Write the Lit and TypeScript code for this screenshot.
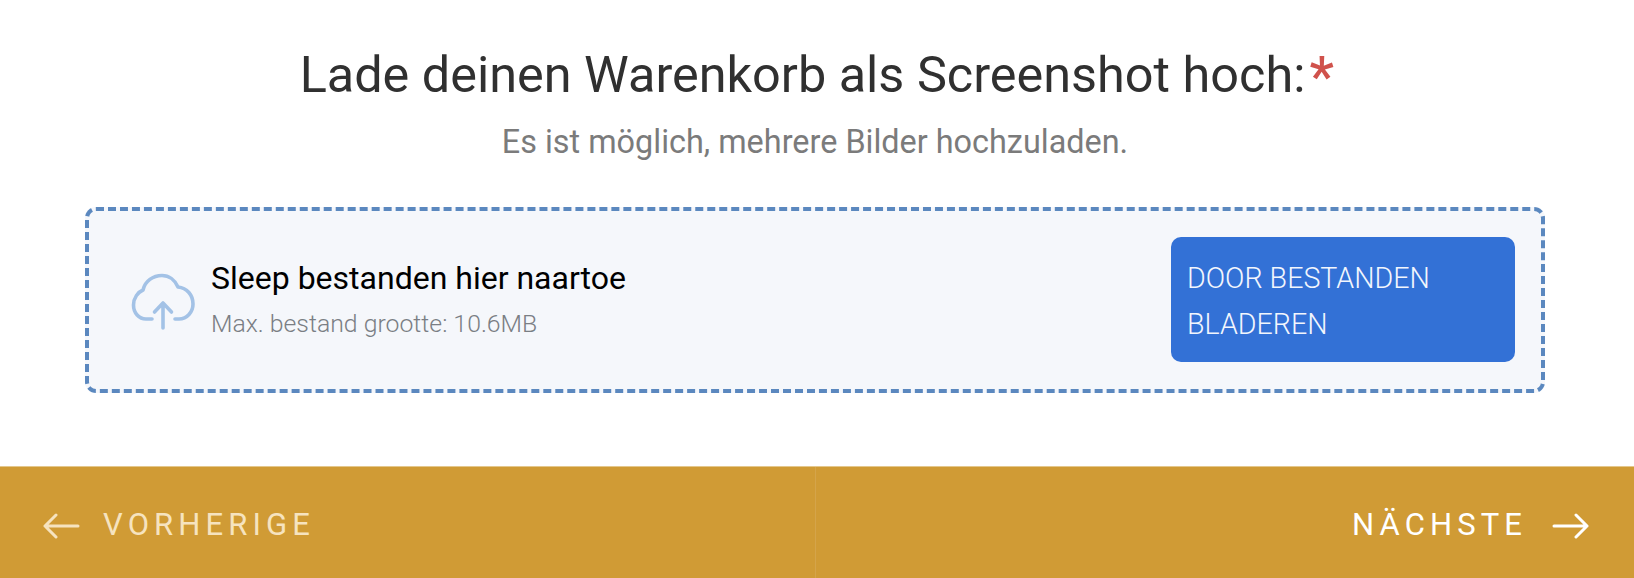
import { LitElement, html, css } from "lit";
import { customElement } from "lit/decorators.js";

@customElement("app-root")
export class AppRoot extends LitElement {
  static styles = css`
    :host { display: flex; flex-direction: column; width: 1634px; height: 578px; background: #fff; font-family: Roboto, "Liberation Sans", sans-serif; overflow: hidden; }
    .main { height: 466px; box-sizing: border-box; padding-top: 43px; display: flex; flex-direction: column; align-items: center; }
    h1 { margin: 0; font-size: 50.4px; line-height: 64px; font-weight: 400; color: #303030; }
    .star { color: #d0524c; font-weight: 500; font-size: 55px; margin-left: 4px; margin-right: 0.6px; line-height: 0; position: relative; top: 4px; }
    .sub { margin-top: 15px; margin-right: 4px; font-size: 32.4px; line-height: 40px; color: #7b7b7b; }
    .drop { margin-top: 45px; align-self: flex-start; margin-left: 85px; width: 1460px; height: 186px; box-sizing: border-box; border: 4px dashed #5b88bf; border-radius: 11px; background: #f5f7fb; display: flex; align-items: center; padding: 0 26px 0 41px; }
    .cloud { width: 66px; height: 58px; flex: none; margin-right: 15px; margin-top: 3px; }
    .text { flex: 1; display: flex; flex-direction: column; margin-bottom: 2px; }
    .t1 { font-size: 32px; line-height: 40px; color: #000; }
    .t2 { font-size: 24.8px; line-height: 32px; font-weight: 300; color: #7a7e84; margin-top: 10px; }
    .btn { width: 344px; height: 125px; margin-bottom: 2px; box-sizing: border-box; flex: none; background: #3371d6; border-radius: 10px; color: #f2f6fd; font-size: 28.6px; font-weight: 300; line-height: 46px; padding: 18px 16px 15px; }
    .foot { height: 112px; display: flex; background: #d09b35; border-top: 1px solid #e4c78c; box-sizing: border-box; }
    .side { display: flex; align-items: center; font-size: 31px; letter-spacing: 5.1px; padding-top: 3px; box-sizing: border-box; }
    .prev { flex: 0 0 816px; gap: 23px; color: #f6e3bf; border-right: 1px solid #d4a44a; padding-left: 43px; }
    .next { flex: 1; gap: 25px; color: #fff; justify-content: flex-end; padding-right: 45px; }
    svg.arrow { width: 37px; height: 26px; flex: none; margin-top: 4px; }
  `;
  render() {
    return html`
      <div class="main">
        <h1>Lade deinen Warenkorb als Screenshot hoch:<span class="star">*</span></h1>
        <div class="sub">Es ist möglich, mehrere Bilder hochzuladen.</div>
        <div class="drop">
          <svg class="cloud" viewBox="0 0 66 58" fill="none" stroke="#a3c2e6" stroke-width="3.6" stroke-linecap="round" stroke-linejoin="round">
            <path d="M22 46H16C9 46 3.5 40 3.5 32C3.5 25 8 19 13 17C15 8 23 2.5 32 2.5C39 2.5 45 7 48 14C57 15 63 22 63 31C63 39 57 46 49 46H45"/>
            <path d="M33 55V30M24.5 39L33 30L41.5 39"/>
          </svg>
          <div class="text">
            <div class="t1">Sleep bestanden hier naartoe</div>
            <div class="t2">Max. bestand grootte: 10.6MB</div>
          </div>
          <div class="btn">DOOR BESTANDEN BLADEREN</div>
        </div>
      </div>
      <div class="foot">
        <div class="side prev">
          <svg class="arrow" viewBox="0 0 37 26" fill="none" stroke="currentColor" stroke-width="3" stroke-linecap="round" stroke-linejoin="round"><path d="M35 13H2M13 2L2 13L13 24"/></svg>
          VORHERIGE
        </div>
        <div class="side next">
          NÄCHSTE
          <svg class="arrow" viewBox="0 0 37 26" fill="none" stroke="currentColor" stroke-width="3" stroke-linecap="round" stroke-linejoin="round"><path d="M2 13H35M24 2L35 13L24 24"/></svg>
        </div>
      </div>
    `;
  }
}
